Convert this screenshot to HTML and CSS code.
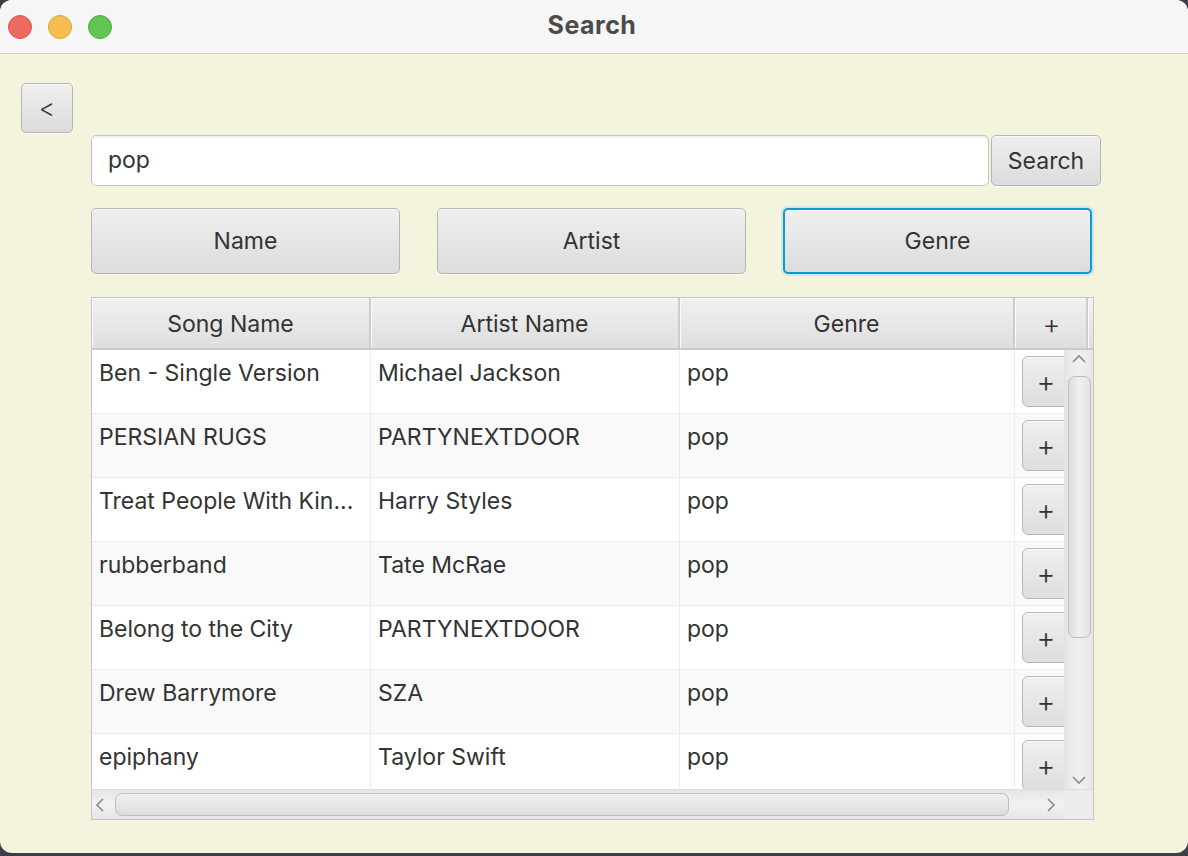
FILE: index.html
```html
<!DOCTYPE html>
<html>
<head>
<meta charset="utf-8">
<link rel="stylesheet" href="styles.css">
</head>
<body>
<div class="window">
  <div class="titlebar">
    <div class="lights">
      <span class="light red"></span>
      <span class="light yellow"></span>
      <span class="light green"></span>
    </div>
    <div class="title">Search</div>
  </div>
  <div class="content">
    <button class="btn back">&lt;</button>
    <div class="search-row">
      <div class="field">pop</div>
      <button class="btn search">Search</button>
    </div>
    <div class="filters">
      <button class="btn filter">Name</button>
      <button class="btn filter">Artist</button>
      <button class="btn filter focused">Genre</button>
    </div>
    <div class="table">
      <div class="thead">
        <div class="th c1">Song Name</div>
        <div class="th c2">Artist Name</div>
        <div class="th c3">Genre</div>
        <div class="th c4 hplus">+</div>
        <div class="th filler"></div>
      </div>
      <div class="tbody">
        <div class="rows">
          <div class="row"><div class="td c1">Ben - Single Version</div><div class="td c2">Michael Jackson</div><div class="td c3">pop</div><div class="td c4"><span class="plus">+</span></div></div>
          <div class="row alt"><div class="td c1">PERSIAN RUGS</div><div class="td c2">PARTYNEXTDOOR</div><div class="td c3">pop</div><div class="td c4"><span class="plus">+</span></div></div>
          <div class="row"><div class="td c1">Treat People With Kin...</div><div class="td c2">Harry Styles</div><div class="td c3">pop</div><div class="td c4"><span class="plus">+</span></div></div>
          <div class="row alt"><div class="td c1">rubberband</div><div class="td c2">Tate McRae</div><div class="td c3">pop</div><div class="td c4"><span class="plus">+</span></div></div>
          <div class="row"><div class="td c1">Belong to the City</div><div class="td c2">PARTYNEXTDOOR</div><div class="td c3">pop</div><div class="td c4"><span class="plus">+</span></div></div>
          <div class="row alt"><div class="td c1">Drew Barrymore</div><div class="td c2">SZA</div><div class="td c3">pop</div><div class="td c4"><span class="plus">+</span></div></div>
          <div class="row"><div class="td c1">epiphany</div><div class="td c2">Taylor Swift</div><div class="td c3">pop</div><div class="td c4"><span class="plus">+</span></div></div>
        </div>
        <div class="vscroll">
          <svg class="arrow" width="16" height="10" viewBox="0 0 16 10"><path d="M2 8 L8 2 L14 8" fill="none" stroke="#8a8a8a" stroke-width="1.6"/></svg>
          <div class="vthumb"></div>
          <div class="vspace"></div>
          <svg class="arrow" width="16" height="10" viewBox="0 0 16 10"><path d="M2 2 L8 8 L14 2" fill="none" stroke="#8a8a8a" stroke-width="1.6"/></svg>
        </div>
      </div>
      <div class="hbar">
        <div class="hscroll">
          <svg class="harrow" width="10" height="16" viewBox="0 0 10 16"><path d="M8 2 L2 8 L8 14" fill="none" stroke="#8a8a8a" stroke-width="1.6"/></svg>
          <div class="hthumb"></div>
          <div class="hspace"></div>
          <svg class="harrow" width="10" height="16" viewBox="0 0 10 16"><path d="M2 2 L8 8 L2 14" fill="none" stroke="#8a8a8a" stroke-width="1.6"/></svg>
        </div>
        <div class="corner"></div>
      </div>
    </div>
  </div>
</div>
</body>
</html>
```

FILE: styles.css
```css
* { box-sizing: border-box; }
html, body {
  margin: 0;
  padding: 0;
  width: 1188px;
  height: 856px;
  overflow: hidden;
  background: #3b4047;
  font-family: Inter, Roboto, "Liberation Sans", sans-serif;
}
.window {
  width: 1188px;
  height: 853px;
  background: #f4f3de;
  border-radius: 12px;
  overflow: hidden;
  display: flex;
  flex-direction: column;
}
.titlebar {
  height: 54px;
  flex: none;
  background: #f6f6f6;
  border-bottom: 1px solid #d5d2bc;
  display: flex;
  align-items: center;
  position: relative;
}
.lights {
  display: flex;
  gap: 16px;
  padding-left: 8px;
  align-items: center;
}
.light {
  width: 24px;
  height: 24px;
  border-radius: 50%;
  display: block;
}
.red { background: #ee6a5f; border: 1px solid #d8574c; }
.yellow { background: #f5be4f; border: 1px solid #dba53c; }
.green { background: #61c554; border: 1px solid #4eab42; }
.title {
  position: absolute;
  left: 0;
  right: 0;
  text-align: center;
  font-weight: bold;
  font-size: 25px;
  color: #4b4b4b;
  top: 10px;
  padding-right: 4px;
  font-family: Inter, "Open Sans", sans-serif;
  letter-spacing: 0.5px;
}
.content {
  flex: 1;
  display: flex;
  flex-direction: column;
  padding: 29px 0 0 0;
}
.btn {
  font-family: Inter, Roboto, "Liberation Sans", sans-serif;
  color: #333;
  background: linear-gradient(#efefef, #dcdcdc);
  border: 1.5px solid #b6b6b6;
  border-radius: 5px;
  box-shadow: inset 0 1px 0 #fafafa, 0 1px 0 #fbfbf3;
  padding: 0;
  cursor: default;
}
.back {
  margin-left: 21px;
  width: 52px;
  height: 50px;
  font-size: 25px;
  font-weight: 300;
}
.search-row {
  display: flex;
  margin: 2px 0 0 91px;
  gap: 2px;
  height: 51px;
}
.field {
  width: 898px;
  height: 51px;
  background: #fff;
  border: 1.5px solid #c4c4c4;
  border-radius: 5px;
  box-shadow: inset 0 2px 2px rgba(0,0,0,0.06);
  font-size: 23px;
  color: #333;
  padding: 10px 0 0 16px;
}
.search {
  width: 110px;
  height: 51px;
  font-size: 23px;
}
.filters {
  display: flex;
  justify-content: space-between;
  margin: 22px 0 0 91px;
  width: 1001px;
  height: 66px;
}
.filter {
  width: 309px;
  height: 66px;
  font-size: 23px;
}
.filter.focused {
  border: 2px solid #0a9bd8;
  box-shadow: 0 0 0 2px #cfe7ea, inset 0 1px 0 #fafafa;
}
.table {
  margin: 23px 0 0 91px;
  width: 1003px;
  height: 523px;
  border: 1.5px solid #c4c4c4;
  background: #fff;
  display: flex;
  flex-direction: column;
}
.thead {
  display: flex;
  height: 52px;
  flex: none;
  border-bottom: 2px solid #c9c9c9;
}
.th {
  background: linear-gradient(#f1f1f1, #dedede);
  border-right: 2px solid #cccccc;
  box-shadow: inset 1px 1px 0 #fafafa;
  font-size: 23px;
  color: #333;
  display: flex;
  align-items: center;
  justify-content: center;
  padding-top: 2px;
}
.th.hplus { font-size: 27px; font-weight: 300; padding-left: 2px; }
.c1 { width: 279px; flex: none; }
.c2 { width: 309px; flex: none; }
.c3 { width: 335px; flex: none; }
.c4 { width: 73px; flex: none; }
.th.filler { flex: 1; border-right: none; }
.tbody {
  flex: 1;
  display: flex;
  overflow: hidden;
  min-height: 0;
}
.rows {
  flex: 1;
  overflow: hidden;
  display: flex;
  flex-direction: column;
}
.row {
  display: flex;
  height: 64px;
  flex: none;
  background: #ffffff;
  border-bottom: 1.5px solid #ececec;
}
.row.alt { background: #f9f9f9; }
.td {
  border-right: 1.5px solid #ececec;
  font-size: 23px;
  color: #333;
  padding: 9px 0 0 7px;
  white-space: nowrap;
  overflow: hidden;
}
.td.c4 {
  border-right: none;
  padding: 6px 0 0 7px;
}
.plus {
  display: flex;
  align-items: center;
  justify-content: center;
  width: 50px;
  height: 51px;
  border: 1.5px solid #b8b8b8;
  border-radius: 6px;
  background: linear-gradient(#f0f0f0, #dedede);
  box-shadow: inset 0 1px 0 #fafafa;
  font-size: 29px;
  font-weight: 300;
  padding-right: 2px;
  color: #333;
}
.vscroll {
  width: 29px;
  flex: none;
  background: linear-gradient(90deg, #e6e6e6, #f1f1f1 50%, #e6e6e6);
  border-left: 1px solid #e2e2e2;
  display: flex;
  flex-direction: column;
  align-items: center;
  padding: 4px 0 4px;
}
.vscroll .arrow { flex: none; }
.vthumb {
  margin-top: 12px;
  width: 23px;
  height: 262px;
  border: 1.5px solid #bdbdbd;
  border-radius: 7px;
  background: linear-gradient(90deg, #dedede, #f0f0f0 50%, #e3e3e3);
}
.vspace { flex: 1; }
.hbar {
  height: 30px;
  flex: none;
  display: flex;
  border-top: 1.5px solid #dcdcdc;
}
.hscroll {
  flex: 1;
  display: flex;
  align-items: center;
  padding: 0 8px 0 3px;
  background: linear-gradient(#e6e6e6, #f1f1f1 50%, #e6e6e6);
}
.hthumb {
  margin-left: 10px;
  width: 894px;
  height: 23px;
  border: 1.5px solid #bdbdbd;
  border-radius: 7px;
  background: linear-gradient(#f0f0f0, #dcdcdc);
}
.hspace { flex: 1; }
.corner {
  width: 29px;
  flex: none;
  background: #ececec;
}
```
